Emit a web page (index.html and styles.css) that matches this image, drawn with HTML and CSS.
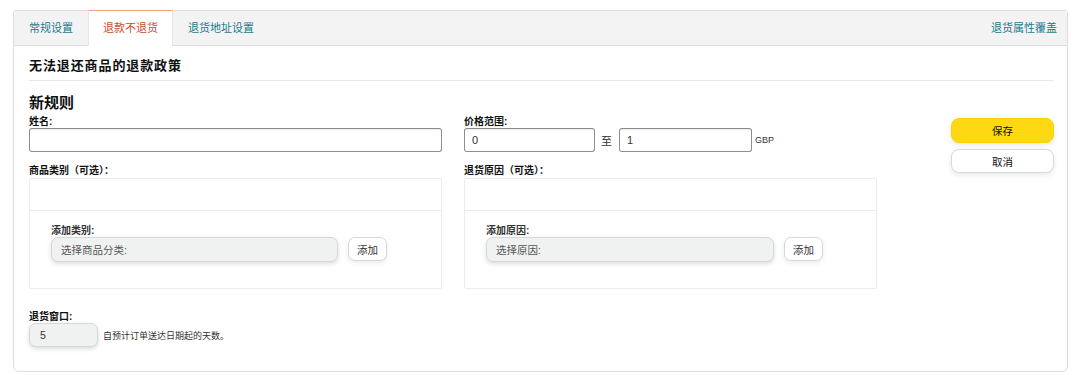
FILE: index.html
```html
<!DOCTYPE html>
<html lang="zh">
<head>
<meta charset="utf-8">
<title>退款不退货</title>
<link rel="stylesheet" href="styles.css">
</head>
<body>
<div class="panel">
  <div class="tabs">
    <a class="tab">常规设置</a>
    <a class="tab active">退款不退货</a>
    <a class="tab">退货地址设置</a>
    <a class="tab-link">退货属性覆盖</a>
  </div>
  <div class="content">
    <div class="policy-title">无法退还商品的退款政策</div>
    <div class="rule">
      <div class="main">
        <h3 class="rule-title">新规则</h3>
        <div class="cols">
          <div class="col">
            <label class="lbl first">姓名:</label>
            <input class="text-input name-input" type="text" value="">
            <label class="lbl">商品类别（可选）：</label>
            <div class="box">
              <div class="box-top"></div>
              <div class="box-bottom">
                <div class="sub-lbl">添加类别:</div>
                <div class="add-row">
                  <span class="select cat-select">选择商品分类:</span>
                  <button class="btn-add">添加</button>
                </div>
              </div>
            </div>
          </div>
          <div class="col">
            <label class="lbl first">价格范围:</label>
            <div class="price-row">
              <input class="text-input price-input" type="text" value="0">
              <span class="to">至</span>
              <input class="text-input price-input wide" type="text" value="1">
              <span class="currency">GBP</span>
            </div>
            <label class="lbl">退货原因（可选）：</label>
            <div class="box">
              <div class="box-top"></div>
              <div class="box-bottom">
                <div class="sub-lbl">添加原因:</div>
                <div class="add-row">
                  <span class="select reason-select">选择原因:</span>
                  <button class="btn-add">添加</button>
                </div>
              </div>
            </div>
          </div>
        </div>
        <div class="window">
          <label class="lbl win-lbl">退货窗口:</label>
          <div class="win-row">
            <input class="days-input" type="text" value="5">
            <span class="win-note">自预计订单送达日期起的天数。</span>
          </div>
        </div>
      </div>
      <div class="actions">
        <button class="btn-save">保存</button>
        <button class="btn-cancel">取消</button>
      </div>
    </div>
  </div>
</div>
</body>
</html>
```
FILE: styles.css
```css
* { box-sizing: border-box; }

body {
  margin: 0;
  padding: 10px 12px 0 13px;
  background: #fff;
  color: #0f1111;
  font-family: "Liberation Sans", "Noto Sans CJK SC", sans-serif;
}

.panel {
  width: 1055px;
  height: 362px;
  border: 1px solid #dcdcdc;
  border-radius: 3px 3px 6px 6px;
  background: #fff;
}

.tabs {
  display: flex;
  height: 35px;
  background: #f3f3f3;
  border-bottom: 1px solid #dddddd;
  font-size: 11px;
}

.tab {
  padding: 0 15px;
  line-height: 34px;
  color: #1b7b8c;
  white-space: nowrap;
}

.tab.active {
  margin-top: -1px;
  height: 36px;
  padding: 0 14px;
  line-height: 34px;
  background: #fff;
  color: #c7511f;
  border-top: 1px solid #f0a27a;
  border-left: 1px solid #e6e6e6;
  border-right: 1px solid #e6e6e6;
}

.tab-link {
  margin-left: auto;
  padding-right: 10px;
  line-height: 34px;
  color: #1b7b8c;
}

.content {
  padding: 0 13px 0 15px;
}

.policy-title {
  padding: 12px 0 6px;
  line-height: 16px;
  font-size: 13px;
  font-weight: bold;
  letter-spacing: 0.9px;
  border-bottom: 1px solid #e8e8e8;
}

.rule {
  display: flex;
}

.main {
  width: 848px;
}

.rule-title {
  margin: 13px 0 0;
  font-size: 15px;
  line-height: 18px;
  font-weight: bold;
}

.cols {
  display: flex;
  gap: 22px;
}

.col {
  width: 413px;
}

.lbl {
  display: block;
  margin: 12px 0 1px;
  font-size: 10px;
  line-height: 13px;
  font-weight: bold;
}

.lbl.first {
  margin: 3px 0 0;
}

.text-input {
  display: block;
  height: 24px;
  padding: 0 7px;
  border: 1px solid #8d9090;
  border-top-color: #8a8d8d;
  border-radius: 3px;
  box-shadow: 0 1px 0 rgba(0, 0, 0, 0.07) inset;
  font-family: inherit;
  font-size: 11px;
  color: #333;
  background: #fff;
  outline: none;
}

.name-input {
  width: 413px;
}

.price-row {
  display: flex;
  align-items: center;
}

.price-input {
  width: 131px;
}

.price-input.wide {
  width: 133px;
}

.to {
  margin: 0 7px 0 6px;
  font-size: 11px;
  color: #333;
}

.currency {
  margin-left: 3px;
  font-size: 9px;
  color: #333;
}

.box {
  border: 1px solid #ececec;
  border-radius: 2px;
  height: 111px;
}

.box-top {
  height: 32px;
  border-bottom: 1px solid #ececec;
}

.box-bottom {
  padding: 13px 0 0 21px;
}

.sub-lbl {
  font-size: 10px;
  line-height: 13px;
  font-weight: bold;
  color: #333;
}

.add-row {
  display: flex;
  align-items: flex-start;
}

.select {
  display: block;
  height: 25px;
  padding-left: 9px;
  line-height: 24px;
  font-size: 10.5px;
  color: #555;
  background: #f0f2f2;
  border: 1px solid #d5d9d9;
  border-radius: 7px;
  box-shadow: 0 2px 4px rgba(150, 155, 155, 0.35);
}

.cat-select { width: 287px; }
.reason-select { width: 288px; }

.btn-add {
  margin-left: 10px;
  width: 39px;
  height: 24px;
  padding: 0;
  font-family: inherit;
  font-size: 10.5px;
  color: #333;
  background: #fff;
  border: 1px solid #d5d9d9;
  border-radius: 7px;
  box-shadow: 0 2px 4px rgba(213, 217, 217, 0.5);
}

.window {
  padding-top: 22px;
}

.lbl.win-lbl {
  margin: 0;
  line-height: 12px;
}

.win-row {
  display: flex;
  align-items: center;
}

.days-input {
  width: 69px;
  height: 24px;
  padding: 0 10px;
  font-family: inherit;
  font-size: 10.5px;
  color: #333;
  background: #f0f2f2;
  border: 1px solid #d5d9d9;
  border-radius: 7px;
  box-shadow: 0 2px 4px rgba(150, 155, 155, 0.35);
  outline: none;
}

.win-note {
  margin-left: 5px;
  font-size: 9px;
  color: #333;
}

.actions {
  margin-left: auto;
  width: 103px;
  padding-top: 37px;
  display: flex;
  flex-direction: column;
  gap: 6px;
}

.btn-save,
.btn-cancel {
  width: 103px;
  padding: 0;
  font-family: inherit;
  font-size: 10.5px;
  color: #0f1111;
  border-radius: 8px;
  box-shadow: 0 2px 5px rgba(213, 217, 217, 0.6);
}

.btn-save {
  height: 25px;
  background: #ffd814;
  border: 1px solid #fcd200;
}

.btn-cancel {
  height: 24px;
  background: #fff;
  border: 1px solid #d5d9d9;
}
```
